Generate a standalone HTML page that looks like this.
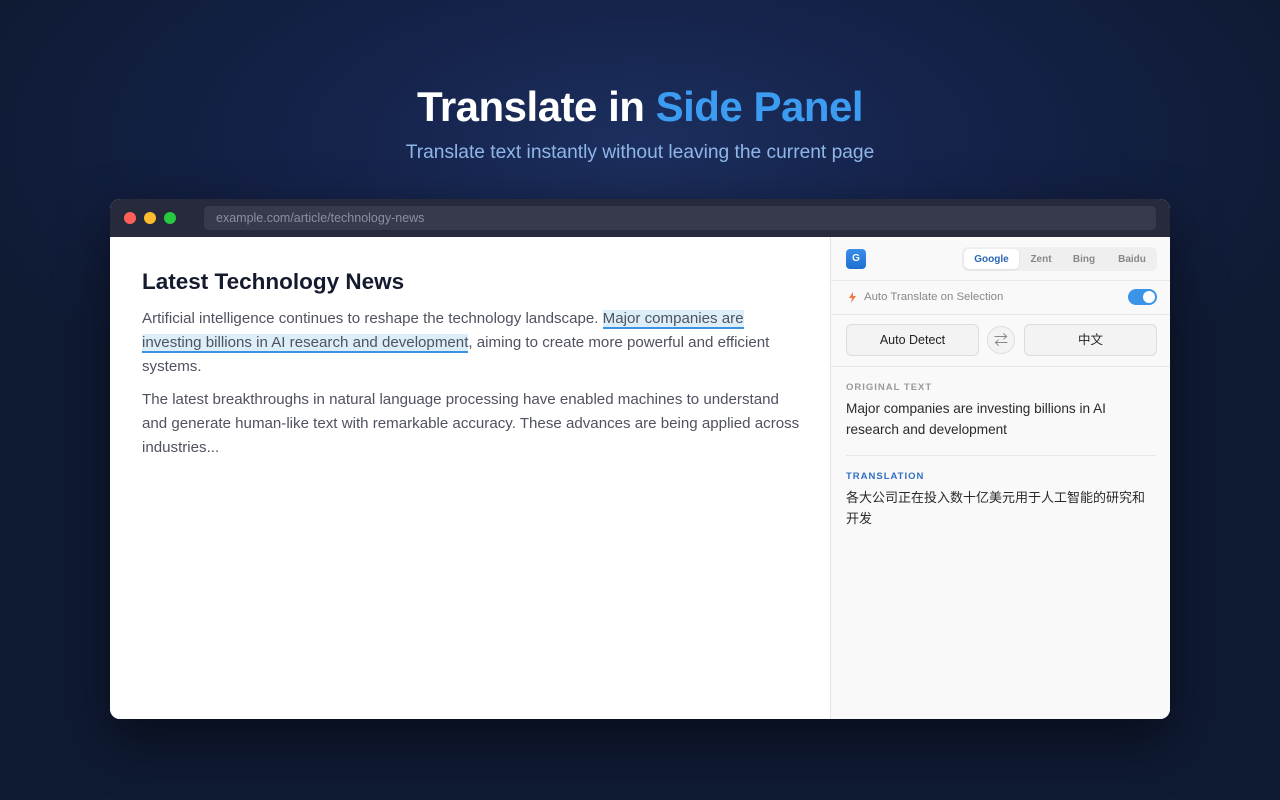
<!DOCTYPE html>
<html><head><meta charset="utf-8"><style>
*{box-sizing:border-box;margin:0;padding:0}
body{width:1280px;height:800px;overflow:hidden;font-family:"Liberation Sans","Noto Sans CJK SC",sans-serif;
background:radial-gradient(ellipse 700px 320px at 640px 140px,#1c2f5e 0%,#15224a 45%,#0f1a33 100%);position:relative}
h1{position:absolute;top:83px;width:100%;text-align:center;color:#fff;font-size:42px;font-weight:700;letter-spacing:-0.5px}
h1 span{color:#3b9cf2}
.sub{position:absolute;top:142px;width:100%;text-align:center;color:#8fb6e8;font-size:19.2px}
.win{position:absolute;left:110px;top:199px;width:1060px;height:520px;border-radius:10px;overflow:hidden;background:#fff;box-shadow:0 20px 50px rgba(0,0,0,.5)}
.bar{height:38px;background:#262a3b;position:relative}
.dot{position:absolute;top:13px;width:12px;height:12px;border-radius:50%}
.url{position:absolute;left:94px;top:7px;width:952px;height:24px;background:#363a4c;border-radius:5px;color:#8a8e9e;font-size:12.5px;line-height:24px;padding-left:12px}
.main{position:absolute;left:0;top:38px;width:720px;bottom:0;background:#fff}
.main h2{position:absolute;left:32px;top:32px;font-size:22.5px;color:#151a2e;font-weight:700}
.p{position:absolute;left:32px;color:#4f5260;font-size:15.1px;line-height:24px;white-space:nowrap}
.hl{background:#ddeefb;border-bottom:2px solid #3b94e0}
.side{position:absolute;left:720px;top:38px;right:0;bottom:0;background:#f9f9f9;border-left:1px solid #e3e3e3}
.g{position:absolute;left:15px;top:12px;width:20px;height:20px;border-radius:4px;background:linear-gradient(#3b8fe8,#1f6fd0);color:#fff;font-size:10px;font-weight:700;text-align:center;line-height:20px}
.tabs{position:absolute;left:131px;top:10px;width:195px;height:24px;background:#efefef;border-radius:6px}
.tabs span{position:absolute;top:2px;height:20px;line-height:22px;font-size:10px;color:#888;font-weight:700;text-align:center}
.line{position:absolute;left:0;right:0;height:1px;background:#e8e8e8}
.auto{position:absolute;left:33px;top:54px;font-size:11.4px;color:#888}
.tog{position:absolute;left:297px;top:52px;width:29px;height:16px;border-radius:8px;background:#3b94e8}
.tog:after{content:"";position:absolute;right:2px;top:2px;width:12px;height:12px;border-radius:50%;background:#fff}
.btn{position:absolute;top:87px;height:32px;border:1px solid #dcdcdc;border-radius:6px;background:#f3f3f3;font-size:12.5px;color:#222;text-align:center;line-height:31px}
.sw{position:absolute;left:156px;top:89px;width:28px;height:28px;border-radius:50%;border:1px solid #ddd;background:#f3f3f3;color:#888;text-align:center;line-height:26px;font-size:14px}
.lab{position:absolute;left:15px;font-size:9.5px;font-weight:700;letter-spacing:1px}
.txt{position:absolute;left:15px;font-size:13.6px;line-height:21px;color:#2a2a2a;white-space:nowrap}
</style></head><body>
<h1>Translate in <span>Side Panel</span></h1>
<div class="sub">Translate text instantly without leaving the current page</div>
<div class="win">
<div class="bar">
<div class="dot" style="left:14px;background:#ff5f57"></div>
<div class="dot" style="left:34px;background:#febc2e"></div>
<div class="dot" style="left:54px;background:#28c840"></div>
<div class="url">example.com/article/technology-news</div>
</div>
<div class="main">
<h2>Latest Technology News</h2>
<div class="p" style="top:70px">Artificial intelligence continues to reshape the technology landscape. <span class="hl">Major companies are</span><br><span class="hl">investing billions in AI research and development</span>, aiming to create more powerful and efficient<br>systems.</div>
<div class="p" style="top:151px">The latest breakthroughs in natural language processing have enabled machines to understand<br>and generate human-like text with remarkable accuracy. These advances are being applied across<br>industries...</div>
</div>
<div class="side">
<div class="g">G</div>
<div class="tabs"><span style="left:2px;width:55px;background:#fff;border-radius:5px;color:#2a64b8;box-shadow:0 1px 2px rgba(0,0,0,.08)">Google</span><span style="left:60px;width:38px">Zent</span><span style="left:103px;width:38px">Bing</span><span style="left:148px;width:44px">Baidu</span></div>
<div class="line" style="top:43px"></div>
<svg style="position:absolute;left:18px;top:55px" width="7" height="11" viewBox="0 0 7 11"><path d="M4 0L0 6h3l-1 5 5-7H4z" fill="#f07a4a"/></svg>
<div class="auto">Auto Translate on Selection</div>
<div class="tog"></div>
<div class="line" style="top:77px"></div>
<div class="btn" style="left:15px;width:133px">Auto Detect</div>
<div class="sw">⇄</div>
<div class="btn" style="left:193px;width:133px">中文</div>
<div class="line" style="top:129px"></div>
<div class="lab" style="top:145px;color:#999">ORIGINAL TEXT</div>
<div class="txt" style="top:161px">Major companies are investing billions in AI<br>research and development</div>
<div class="line" style="top:218px;left:15px;right:14px"></div>
<div class="lab" style="top:234px;color:#2f6fbe">TRANSLATION</div>
<div class="txt" style="top:250px;font-size:13px">各大公司正在投入数十亿美元用于人工智能的研究和<br>开发</div>
</div>
</div>
</body></html>
